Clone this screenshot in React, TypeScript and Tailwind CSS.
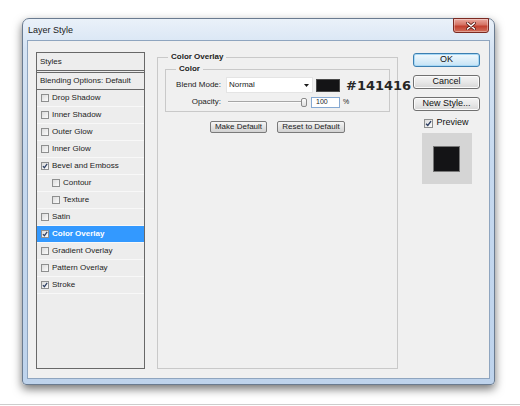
import type { ReactNode } from 'react';

const UI_FONT = { fontFamily: '"Liberation Sans", Arial, sans-serif' };

type StyleItem = { label: string; checked?: boolean; indent?: boolean; active?: boolean };

const STYLE_ITEMS: StyleItem[] = [
  { label: 'Drop Shadow' },
  { label: 'Inner Shadow' },
  { label: 'Outer Glow' },
  { label: 'Inner Glow' },
  { label: 'Bevel and Emboss', checked: true },
  { label: 'Contour', indent: true },
  { label: 'Texture', indent: true },
  { label: 'Satin' },
  { label: 'Color Overlay', checked: true, active: true },
  { label: 'Gradient Overlay' },
  { label: 'Pattern Overlay' },
  { label: 'Stroke', checked: true },
];

function Checkbox({ checked, size = 8 }: { checked?: boolean; size?: number }) {
  return (
    <span
      className="flex shrink-0 items-center justify-center border border-[#8e8f8f] bg-[linear-gradient(135deg,#dcdcdc,#fbfbfb)]"
      style={{ width: size, height: size }}
    >
      {checked && (
        <svg width={size - 2} height={size - 2} viewBox="0 0 8 8">
          <path d="M1.2 4.2 L3.2 6.3 L6.9 1.3" fill="none" stroke="#2d3f63" strokeWidth="1.6" />
        </svg>
      )}
    </span>
  );
}

function StylesPanel() {
  return (
    <div className="flex h-[317px] w-[109px] shrink-0 flex-col border border-[#686868] bg-[#ededed] text-[8px] text-[#1c1c1c]">
      <div className="flex h-[20px] items-center border-b-[3px] border-double border-[#686868] pl-[3px]">Styles</div>
      <div className="flex h-[17px] items-center border-b border-[#686868] pl-[3px]">Blending Options: Default</div>
      {STYLE_ITEMS.map((item) => (
        <div
          key={item.label}
          className={
            'flex h-[17px] items-center gap-[3px] border-b border-[#f8f8f8] ' +
            (item.indent ? 'pl-[15px] ' : 'pl-[4px] ') +
            (item.active ? 'bg-[#3399ff] font-bold text-white' : '')
          }
        >
          <Checkbox checked={item.checked} />
          <span>{item.label}</span>
        </div>
      ))}
    </div>
  );
}

function SmallButton({ children, width }: { children: ReactNode; width: number }) {
  return (
    <button
      className="flex h-[12px] items-center justify-center rounded-[2px] border border-[#7a7a7a] bg-[linear-gradient(#f6f6f6,#e3e3e3_50%,#d2d2d2)] text-[8px] text-[#1c1c1c]"
      style={{ width }}
    >
      {children}
    </button>
  );
}

function ColorOverlayGroup() {
  return (
    <fieldset className="ml-[12px] h-[317px] w-[241px] min-w-0 shrink-0 border border-[#c9c9c9]">
      <legend className="ml-[10px] px-[3px] text-[8px] leading-[10px] font-bold text-[#1c1c1c]">Color Overlay</legend>
      <fieldset className="mt-[2px] ml-[7px] w-[225px] min-w-0 border border-[#c9c9c9] px-0 pt-[3px] pb-[3px]">
        <legend className="ml-[10px] px-[3px] text-[8px] leading-[10px] font-bold text-[#1c1c1c]">Color</legend>
        <div className="flex h-[16px] items-center">
          <span className="w-[56px] shrink-0 pr-[1px] text-right text-[8px] text-[#1c1c1c]">Blend Mode:</span>
          <div className="ml-[4px] flex h-[16px] w-[87px] shrink-0 items-center justify-between border border-[#e4e4e4] bg-white pr-[3px] pl-[2px] text-[8px] text-[#1c1c1c]">
            <span>Normal</span>
            <svg width="5" height="3" viewBox="0 0 5 3">
              <path d="M0 0 H5 L2.5 3 Z" fill="#1a1a1a" />
            </svg>
          </div>
          <span className="ml-[3px] h-[13px] w-[24px] shrink-0 border border-[#4a4a4a] bg-[#141416]" />
          <span
            className="ml-[6px] shrink-0 text-[13px] leading-none font-bold whitespace-nowrap text-[#262626]"
            style={{ fontFamily: '"DejaVu Sans", Verdana, sans-serif' }}
          >
            #141416
          </span>
        </div>
        <div className="mt-[3px] flex h-[12px] items-center">
          <span className="w-[56px] shrink-0 pr-[1px] text-right text-[8px] text-[#1c1c1c]">Opacity:</span>
          <div className="ml-[6px] flex items-center">
            <span className="h-[2px] w-[75px] border-t border-b border-t-[#a6a6a6] border-b-[#fafafa]" />
            <span className="-ml-[2px] h-[9px] w-[6px] rounded-[2px] border border-[#8a8a8a] bg-[linear-gradient(#fdfdfd,#dedede)]" />
          </div>
          <span className="ml-[4px] flex h-[11px] w-[29px] items-center border border-[#86a9d2] bg-white pl-[4px] text-[7px] text-[#1c1c1c]">100</span>
          <span className="ml-[3px] text-[7px] text-[#1c1c1c]">%</span>
        </div>
      </fieldset>
      <div className="mt-[9px] flex justify-center gap-[10px]">
        <SmallButton width={57}>Make Default</SmallButton>
        <SmallButton width={68}>Reset to Default</SmallButton>
      </div>
    </fieldset>
  );
}

function DialogButton({ children, primary }: { children: ReactNode; primary?: boolean }) {
  return (
    <button
      className={
        'flex h-[14px] w-[67px] items-center justify-center rounded-[3px] border text-[9px] text-[#111] ' +
        (primary
          ? 'border-[#3c7fb1] bg-[linear-gradient(#f2f9fd,#dceef9_50%,#c4e3f6)] shadow-[inset_0_0_0_1px_#a7d8f5]'
          : 'border-[#707070] bg-[linear-gradient(#f4f4f4,#e8e8e8_50%,#d6d6d6)] shadow-[inset_0_0_0_1px_#fbfbfb]')
      }
    >
      {children}
    </button>
  );
}

function SideColumn() {
  return (
    <div className="mt-[1px] ml-[15px] flex w-[67px] shrink-0 flex-col items-center">
      <div className="flex w-full flex-col gap-[8px]">
        <DialogButton primary>OK</DialogButton>
        <DialogButton>Cancel</DialogButton>
        <DialogButton>New Style...</DialogButton>
      </div>
      <label className="mt-[7px] flex h-[10px] items-center gap-[3px] text-[9px] text-[#111]">
        <Checkbox checked size={9} />
        <span>Preview</span>
      </label>
      <div className="mt-[5px] flex h-[51px] w-[50px] items-center justify-center bg-[#d5d5d5]">
        <span className="h-[26px] w-[27px] border border-[#777] bg-[#141416]" />
      </div>
    </div>
  );
}

function CloseButton() {
  return (
    <button className="-mt-[1px] mr-[1px] flex h-[15px] w-[36px] items-center justify-center self-start rounded-b-[3px] border border-[#7b2a22] bg-[linear-gradient(#eba99f,#d57263_45%,#c2402f_55%,#d2705c)] shadow-[inset_0_0_0_1px_rgba(255,255,255,0.35)]">
      <svg width="10" height="8" viewBox="0 0 10 8">
        <path d="M1.5 1 L8.5 7 M8.5 1 L1.5 7" stroke="#5a1a14" strokeWidth="3" strokeLinecap="round" />
        <path d="M1.5 1 L8.5 7 M8.5 1 L1.5 7" stroke="#ffffff" strokeWidth="1.6" strokeLinecap="round" />
      </svg>
    </button>
  );
}

export default function App() {
  return (
    <div className="h-[406px] w-[520px] bg-white" style={UI_FONT}>
      <div className="h-[405px] border-b border-[#cdcdcd] pt-[18px] pl-[22px]">
        <div className="flex h-[367px] w-[473px] flex-col rounded-t-[7px] rounded-b-[4px] border border-[#6a7b90] bg-[linear-gradient(180deg,#eaf1f9_0%,#d6e4f4_8%,#c6d9ef_40%,#bed3ec_100%)] px-[4px] pb-[5px] shadow-[0_4px_10px_rgba(0,0,0,0.55)]">
          <div className="flex h-[21px] items-start justify-between">
            <span className="mt-[6px] pl-[1px] text-[9px] leading-[10px] text-[#1a1a1a]">Layer Style</span>
            <CloseButton />
          </div>
          <div className="flex flex-1 items-start border border-[#8fa5bf] bg-[#f0f0f0] pt-[11px] pl-[8px]">
            <StylesPanel />
            <ColorOverlayGroup />
            <SideColumn />
          </div>
        </div>
      </div>
    </div>
  );
}
